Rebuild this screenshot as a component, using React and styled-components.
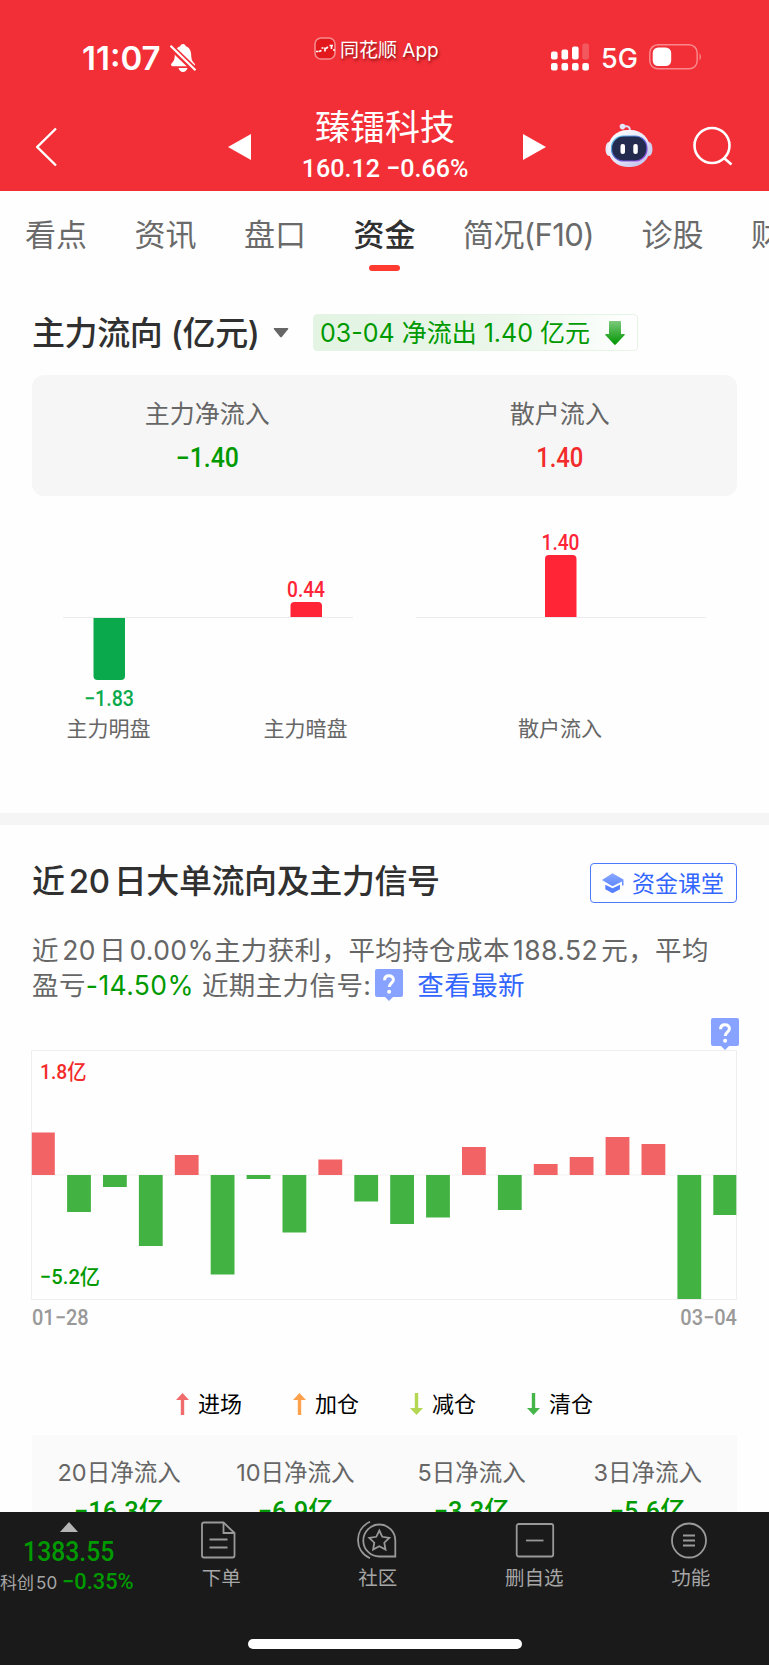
import React from 'react'
import styled, { createGlobalStyle } from 'styled-components'

const tabs = ['看点', '资讯', '盘口', '资金', '简况(F10)', '诊股', '财']

const flowBars = [
    { label: '主力明盘', value: '−1.83', x: 77, height: -62 },
    { label: '主力暗盘', value: '0.44', x: 274, height: 15 },
    { label: '散户流入', value: '1.40', x: 528.5, height: 62 },
]

const dailyFlow = [
    42.5, -37, -12, -71, 20, -99.5, -4, -57.5, 15.5, -26.5,
    -49, -42.5, 28, -35, 11, 18, 38, 31, -124, -40,
]

const signals = [
    { name: '进场', color: '#f06b6b', up: true },
    { name: '加仓', color: '#ffa04d', up: true },
    { name: '减仓', color: '#b3d653', up: false },
    { name: '清仓', color: '#45b549', up: false },
]

const totals = [
    { name: '20日净流入', value: '−16.3亿' },
    { name: '10日净流入', value: '−6.9亿' },
    { name: '5日净流入', value: '−3.3亿' },
    { name: '3日净流入', value: '−5.6亿' },
]

function QuestionMark() {
    return (
        <svg width="28" height="32" viewBox="0 0 28 32">
            <path d="M2 0h24a2 2 0 0 1 2 2v24a2 2 0 0 1-2 2h-8l-4 4-4-4H2a2 2 0 0 1-2-2V2a2 2 0 0 1 2-2z" fill="#88a3ff"/>
            <path d="M9.600 11.200c0-2.800 1.900-4.400 4.400-4.400s4.400 1.600 4.400 4c0 3.300-4.200 3.400-4.200 7.200" fill="none" stroke="#fff" strokeWidth="3"/>
            <circle cx="14.100" cy="22.800" r="2" fill="#fff"/>
        </svg>
    )
}

function Robot() {
    return (
        <svg width="48" height="46" viewBox="0 0 48 46">
            <defs>
                <linearGradient id="shell" x1="0" y1="0" x2=".8" y2="1">
                    <stop offset="0" stopColor="#ffffff"/>
                    <stop offset=".6" stopColor="#e6e6f8"/>
                    <stop offset="1" stopColor="#bfc1ea"/>
                </linearGradient>
                <linearGradient id="rim" x1="0" y1="0" x2="1" y2="1">
                    <stop offset="0" stopColor="#55d8ec"/>
                    <stop offset=".5" stopColor="#5a5fd8"/>
                    <stop offset="1" stopColor="#a94be8"/>
                </linearGradient>
            </defs>
            <path d="M18 3.500c5-1 7 0 7 5" fill="none" stroke="#dfe0f6" strokeWidth="2"/>
            <circle cx="17.500" cy="3.600" r="2.800" fill="#e4e5f8"/>
            <ellipse cx="4" cy="26" rx="3.500" ry="7" fill="#e9e9f9"/>
            <ellipse cx="44" cy="26" rx="3.500" ry="7" fill="#cfcff1"/>
            <rect x="3" y="7" width="42" height="37" rx="19" fill="url(#shell)"/>
            <rect x="6.500" y="13" width="35.500" height="25" rx="12" fill="#232c4e" stroke="url(#rim)" strokeWidth="1.200"/>
            <rect x="15.500" y="21" width="4.500" height="10" rx="2" fill="#fff"/>
            <rect x="28.300" y="21" width="4.500" height="10" rx="2" fill="#fff"/>
        </svg>
    )
}

function FlowChart() {
    return (
        <ChartSvg width="705" height="317" viewBox="0 0 705 317">
            <path d="M31 121.500h290M384 121.500h290" stroke="#ececec" strokeWidth="1"/>
            {flowBars.map(({ label, value, x, height }) => {
                const up = height > 0
                const color = up ? '#ff2436' : '#0aaa4c'
                const h = Math.abs(height)
                return (
                    <g key={label}>
                        <path
                            transform={`translate(${x - 15.5} ${up ? 121 : 122}) scale(1 ${up ? -1 : 1})`}
                            d={`M0 0V${h - 4}q0 4 4 4H27.500q4 0 4-4V0z`}
                            fill={color}
                        />
                        <ChartValue x={x} y={up ? 121 - h - 5.5 : 209.5} fill={color} textLength={up ? 38 : 50} lengthAdjust="spacingAndGlyphs">
                            {value}
                        </ChartValue>
                        <ChartLabel x={x - 0.5} y="240">{label}</ChartLabel>
                    </g>
                )
            })}
        </ChartSvg>
    )
}

function DailyChart() {
    return (
        <DailySvg width="706" height="250" viewBox="0 0 706 250">
            <rect x=".5" y=".5" width="705" height="249" fill="none" stroke="#efefef"/>
            <path d="M0 125h706" stroke="#f2f2f2"/>
            {dailyFlow.map((v, i) => (
                <rect
                    key={i}
                    x={i * 35.9 + (i ? 0.2 : 0.8)}
                    y={v > 0 ? 125 - v : 125}
                    width={i === 0 || i === 19 ? 23 : 23.8}
                    height={Math.abs(v)}
                    fill={v > 0 ? '#f16365' : '#42b342'}
                />
            ))}
            <AxisText x="9" y="29" fill="#f22b2b" textLength="46.500" lengthAdjust="spacingAndGlyphs">1.8亿</AxisText>
            <AxisText x="9" y="234" fill="#009a00" textLength="60" lengthAdjust="spacingAndGlyphs">−5.2亿</AxisText>
        </DailySvg>
    )
}

function App() {
    return (
        <Page>
            <GlobalStyle/>
            <Header>
                <StatusBar>
                    <Clock>11:07</Clock>
                    <svg width="28" height="30" viewBox="0 0 28 30">
                        <path d="M14 1c1.600 0 2.500 1 2.700 2.200 3.900 1.200 5.300 4.400 5.500 8.800.2 5 1.300 6.600 3.300 8.600.9 1 .5 2.600-1 2.600H3.500c-1.500 0-1.900-1.600-1-2.600 2-2 3.100-3.600 3.300-8.600.2-4.400 1.600-7.600 5.500-8.800C11.500 2 12.400 1 14 1z" fill="#fff"/>
                        <path d="M9.500 25h9c-.5 2.200-2.200 4-4.500 4s-4-1.800-4.500-4z" fill="#fff"/>
                        <path d="M-1 1L28 29" stroke="#f22f37" strokeWidth="6"/>
                        <path d="M1.500 2.800L26.500 27.200" stroke="#fff" strokeWidth="2.200"/>
                    </svg>
                    <AppBadge>
                        <svg width="22" height="23" viewBox="0 0 22 23">
                            <rect x="1" y="1" width="20" height="21" rx="6" fill="#e3181c" stroke="#f58a8c" strokeWidth="1.600"/>
                            <path d="M2 14.500h2.500M5 14.500l2.500-1M7.500 11h2M11 10.500v4M12 11.500l2-1.500M15.500 8.500h3.500M17.500 9v3M19 13h2" fill="none" stroke="#fff" strokeWidth="1.700"/>
                        </svg>
                        同花顺 App
                    </AppBadge>
                    <Phone>
                        <svg width="38" height="28" viewBox="0 0 38 28" fill="#fff">
                            <rect x="0" y="8.500" width="6.600" height="8" rx="2"/>
                            <rect x="10.500" y="6.500" width="6.600" height="10" rx="2"/>
                            <rect x="21" y="3.500" width="6.600" height="13" rx="2"/>
                            <rect x="31.300" y="0.500" width="6.600" height="16" rx="2" opacity=".2"/>
                            <rect x="0" y="20" width="6.600" height="7.500" rx="2"/>
                            <rect x="10.500" y="20" width="6.600" height="7.500" rx="2"/>
                            <rect x="21" y="20" width="6.600" height="7.500" rx="2"/>
                            <rect x="31.300" y="20" width="6.600" height="7.500" rx="2"/>
                        </svg>
                        <Network>5G</Network>
                        <Battery width="54" height="26" viewBox="0 0 54 26">
                            <rect x=".8" y=".8" width="47.400" height="24" rx="8" fill="none" stroke="#f9888c" strokeWidth="1.500"/>
                            <rect x="3.700" y="3.500" width="18.500" height="18.500" rx="5.500" fill="#fff"/>
                            <path d="M50.500 9q3 3.800 0 7.600z" fill="#f9888c"/>
                        </Battery>
                    </Phone>
                </StatusBar>
                <NavBar>
                    <svg width="22" height="40" viewBox="0 0 22 40">
                        <path d="M20 1.500L1.300 20 20 38.500" fill="none" stroke="#fff" strokeWidth="2.400"/>
                    </svg>
                    <Triangle viewBox="0 0 23 26">
                        <path d="M23 0v26L0 13z" fill="#fff"/>
                    </Triangle>
                    <Stock>
                        <StockName>臻镭科技</StockName>
                        <Price $scale={0.945}>160.12 −0.66%</Price>
                    </Stock>
                    <Triangle viewBox="0 0 23 26">
                        <path d="M0 0v26l23-13z" fill="#fff"/>
                    </Triangle>
                    <NavIcons>
                        <Robot/>
                        <svg width="40" height="40" viewBox="0 0 40 40" fill="none" stroke="#fff" strokeWidth="2.600">
                            <circle cx="19" cy="19.500" r="17.500"/>
                            <path d="M31 32l7.500 6.500"/>
                        </svg>
                    </NavIcons>
                </NavBar>
            </Header>
            <TabBar>
                {tabs.map((tab) => (
                    <Tab key={tab} $active={tab === '资金'} $tight={tab.length > 2}>{tab}</Tab>
                ))}
            </TabBar>
            <Content>
                <Section>
                    <FlowTitle>
                        <FlowName>主力流向 (亿元)</FlowName>
                        <svg width="16" height="10" viewBox="0 0 16 10">
                            <path d="M1.500 0h13q1.500 0 .5 1.300L9 8.700q-1 1-2 0L1 1.300Q0 0 1.500 0z" fill="#666"/>
                        </svg>
                        <FlowTag>
                            <TagText>03-04 净流出 1.40 亿元</TagText>
                            <svg width="20" height="24" viewBox="0 0 20 24">
                                <defs>
                                    <linearGradient id="down" x1="0" y1="0" x2="0" y2="1">
                                        <stop offset="0" stopColor="#7cc97c"/>
                                        <stop offset="1" stopColor="#009600"/>
                                    </linearGradient>
                                </defs>
                                <path d="M5 0h10q1 0 1 1v12h3.500q.5.800 0 1.300L11 23.200q-1 1-2 0L.5 14.300Q0 13.800.5 13H4V1q0-1 1-1z" fill="url(#down)"/>
                            </svg>
                        </FlowTag>
                    </FlowTitle>
                    <Summary>
                        <SummaryCell>
                            <SummaryLabel>主力净流入</SummaryLabel>
                            <SummaryValue $scale={0.92} $color="#009a00">−1.40</SummaryValue>
                        </SummaryCell>
                        <SummaryCell>
                            <SummaryLabel>散户流入</SummaryLabel>
                            <SummaryValue $scale={0.88} $color="#f22b2b">1.40</SummaryValue>
                        </SummaryCell>
                    </Summary>
                    <FlowChart/>
                </Section>
                <Divider/>
                <Section>
                    <TitleRow>
                        <SectionTitle>近20日大单流向及主力信号</SectionTitle>
                        <CourseButton>
                            <svg width="22" height="21" viewBox="0 0 22 21">
                                <defs>
                                    <linearGradient id="cap" x1="0" y1="0" x2="0" y2="1">
                                        <stop offset="0" stopColor="#8aa9ff"/>
                                        <stop offset="1" stopColor="#5f88ff"/>
                                    </linearGradient>
                                </defs>
                                <path d="M10.500.3L21.500 6.500v6H20V8.500L10.500 13.300 0 7z" fill="url(#cap)"/>
                                <path d="M3.300 11.800l7.200 3.400 7.500-3.400v4.500l-7.500 4-7.200-4z" fill="#5580ff"/>
                            </svg>
                            <CourseText>资金课堂</CourseText>
                        </CourseButton>
                    </TitleRow>
                    <Description>
                        <Line>近20日0.00%主力获利，平均持仓成本188.52元，平均</Line>
                        <Line>
                            盈亏<Loss>-14.50%</Loss> 近期主力信号:
                            <SignalHelp>
                                <QuestionMark/>
                            </SignalHelp>
                            <Link>查看最新</Link>
                        </Line>
                    </Description>
                    <Help>
                        <QuestionMark/>
                    </Help>
                    <DailyChart/>
                    <Dates>
                        <DateText $origin="left">01−28</DateText>
                        <DateText $origin="right">03−04</DateText>
                    </Dates>
                    <Legend>
                        {signals.map(({ name, color, up }) => (
                            <LegendItem key={name}>
                                <svg width="13" height="22" viewBox="0 0 13 22">
                                    <path
                                        transform={up ? undefined : 'rotate(180 6.5 11)'}
                                        d="M6.500 0L13 7H8.200v15H4.800V7H0z"
                                        fill={color}
                                    />
                                </svg>
                                {name}
                            </LegendItem>
                        ))}
                    </Legend>
                    <Totals>
                        {totals.map(({ name, value }) => (
                            <Total key={name}>
                                <TotalName>{name}</TotalName>
                                <TotalValue $scale={0.98}>{value}</TotalValue>
                            </Total>
                        ))}
                    </Totals>
                </Section>
            </Content>
            <Footer>
                <FooterBar>
                    <IndexBox>
                        <svg width="18" height="10" viewBox="0 0 18 10">
                            <path d="M9 0l9 10H0z" fill="#b5b5b5"/>
                        </svg>
                        <IndexValue $scale={0.9}>1383.55</IndexValue>
                        <IndexLine>
                            科创50<IndexChange>−0.35%</IndexChange>
                        </IndexLine>
                    </IndexBox>
                    <FooterItem $shift={-2}>
                        <FooterIcon viewBox="0 0 40 40">
                            <path d="M5 2.500h19.500L35.500 13v22.500q0 2-2 2H5q-2 0-2-2v-31q0-2 2-2z"/>
                            <path d="M24.500 2.500V13h11M10.500 19.500H28.500M10.500 27.500H28.500"/>
                        </FooterIcon>
                        下单
                    </FooterItem>
                    <FooterItem $shift={-1}>
                        <FooterIcon viewBox="0 0 40 40">
                            <path d="M13 1.800C-3 9-3 31 13 38.200"/>
                            <path d="M38.300 36.500H22.500A16 16 0 1 1 38.300 20.500z"/>
                            <path d="M22.300 10.500l3 6.300 7 1-5 4.900 1.200 6.900-6.200-3.300-6.200 3.300 1.200-6.900-5-4.900 7-1z"/>
                        </FooterIcon>
                        社区
                    </FooterItem>
                    <FooterItem $shift={1}>
                        <FooterIcon viewBox="0 0 40 40">
                            <rect x="1.700" y="4" width="36.500" height="32.500" rx="2"/>
                            <path d="M11 20.500h17.500"/>
                        </FooterIcon>
                        删自选
                    </FooterItem>
                    <FooterItem $shift={-2}>
                        <FooterIcon viewBox="0 0 40 40">
                            <circle cx="20" cy="20.500" r="17"/>
                            <path d="M14 15.500h12M14 20.500h12M14 25.500h12"/>
                        </FooterIcon>
                        功能
                    </FooterItem>
                </FooterBar>
                <HomeIndicator/>
            </Footer>
        </Page>
    )
}

export default App

const GlobalStyle = createGlobalStyle`
    body {
        margin: 0;
        background: #fff;
    }

    svg {
        display: block;
        flex: none;
    }
`

const Page = styled.div`
    display: flex;
    flex-direction: column;
    width: 769px;
    height: 1665px;
    overflow: hidden;
    background: #fefefe;
    color: #666;
    font-family: Inter, "Noto Sans CJK SC", sans-serif;
    white-space: nowrap;
    text-autospace: no-autospace;
`

/* narrow numerals, squeezed around their own centre */
const Num = styled.span`
    display: inline-block;
    font-family: Roboto, "Noto Sans CJK SC", sans-serif;
    font-weight: 500;
    transform: scaleX(${({ $scale }) => $scale || 1});
`

const Header = styled.div`
    flex: none;
    height: 191px;
    background: #f22f37;
    color: #fff;
`

const StatusBar = styled.div`
    display: flex;
    height: 73px;
    padding: 43px 0 0 82px;
    box-sizing: border-box;
`

const Clock = styled.div`
    width: 87px;
    font-size: 33px;
    font-weight: 600;
    line-height: 31px;
`

const AppBadge = styled.div`
    display: flex;
    gap: 4px;
    margin: -6px 0 0 117px;
    width: 237px;
    font-size: 19px;
    line-height: 27px;
    text-shadow: 1px 2px 3px rgba(90, 0, 0, .7);
`

const Phone = styled.div`
    display: flex;
`

const Network = styled.div`
    width: 48px;
    padding-left: 12px;
    font-size: 27px;
    font-weight: 500;
    line-height: 32px;
`

const Battery = styled.svg`
    margin-top: 1px;
`

const NavBar = styled.div`
    display: flex;
    align-items: center;
    height: 118px;
    padding: 0 36px;
    box-sizing: border-box;

    > svg {
        margin-top: 30px;
    }
`

const Triangle = styled.svg`
    width: 23px;
    height: 26px;

    &:nth-of-type(2) {
        margin-left: 170px;
    }
`

const Stock = styled.div`
    display: flex;
    flex-direction: column;
    align-items: center;
    width: 273px;
    padding: 26px 4px 0 0;
    box-sizing: border-box;
`

const StockName = styled.div`
    font-size: 35px;
    line-height: 46px;
`

const Price = styled(Num)`
    font-size: 26.500px;
    line-height: 36px;
`

const NavIcons = styled.div`
    display: flex;
    align-items: center;
    gap: 40px;
    margin: 28px 0 0 59px;
`

const TabBar = styled.div`
    display: flex;
    flex: none;
    gap: 47.500px;
    height: 89px;
    padding-left: 25px;
`

const Tab = styled.div`
    position: relative;
    flex: none;
    height: 88px;
    font-size: 31px;
    line-height: 87px;
    letter-spacing: ${({ $tight }) => ($tight ? '-0.6px' : '0')};
    color: ${({ $active }) => ($active ? '#303030' : '#6a6a6a')};
    font-weight: ${({ $active }) => ($active ? 500 : 400)};

    &::after {
        content: '';
        display: ${({ $active }) => ($active ? 'block' : 'none')};
        position: absolute;
        left: calc(50% - 15.500px);
        bottom: 8px;
        width: 31px;
        height: 6px;
        border-radius: 3px;
        background: #ff3a30;
    }
`

const Content = styled.div`
    flex: 1;
    min-height: 0;
    overflow: hidden;
`

const Section = styled.div`
    padding: 0 32px;
`

const FlowTitle = styled.div`
    display: flex;
    align-items: center;
    height: 37px;
    padding-top: 34px;
`

const SectionTitle = styled.div`
    color: #303030;
    font-size: 33px;
    font-weight: 500;
    line-height: 38px;
    letter-spacing: -.4px;
    text-autospace: normal;
`

const FlowName = styled(SectionTitle)`
    width: 241px;
    line-height: 40px;
`

const FlowTag = styled.div`
    display: flex;
    align-items: center;
    justify-content: space-between;
    width: 325px;
    height: 37px;
    margin-left: 24px;
    padding: 0 12px 0 6px;
    box-sizing: border-box;
    border: 1px solid #e6f4e6;
    border-radius: 4px;
    background: linear-gradient(90deg, #e3f4e3, #e9f6e9 55%, #fff);
    color: #009a00;
    font-size: 25px;
`

const TagText = styled.span`
    padding-bottom: 4px;
`

const Summary = styled.div`
    display: flex;
    height: 121px;
    margin-top: 24px;
    border-radius: 12px;
    background: #f6f6f6;
`

const SummaryCell = styled.div`
    display: flex;
    flex: 1;
    flex-direction: column;
    align-items: center;
    padding: 19px 2px 0 0;
`

const SummaryLabel = styled.div`
    font-size: 25px;
    line-height: 40px;
`

const SummaryValue = styled(Num)`
    margin-top: 4px;
    color: ${({ $color }) => $color};
    font-size: 27px;
    line-height: 40px;
`

const ChartSvg = styled.svg`
    font-family: Roboto, "Noto Sans CJK SC", sans-serif;
`

const DailySvg = styled(ChartSvg)`
    margin-left: -1px;
`

const ChartValue = styled.text`
    font-size: 21.500px;
    font-weight: 500;
    text-anchor: middle;
`

const ChartLabel = styled.text`
    font-size: 21px;
    fill: #666;
    text-anchor: middle;
`

const AxisText = styled.text`
    font-size: 21px;
    font-weight: 500;
`

const Divider = styled.div`
    height: 12px;
    background: #f5f5f5;
`

const TitleRow = styled.div`
    display: flex;
    justify-content: space-between;
    padding-top: 37px;
`

const CourseButton = styled.div`
    display: flex;
    align-items: center;
    gap: 8px;
    width: 147px;
    height: 40px;
    padding-left: 11px;
    margin-top: 1px;
    box-sizing: border-box;
    border: 1.500px solid #4d79ff;
    border-radius: 4px;
    color: #3366ff;
    font-size: 23px;
`

const CourseText = styled.span`
    padding-bottom: 2px;
`

const Description = styled.div`
    margin-top: 29px;
    font-size: 26.500px;
    line-height: 36px;
    letter-spacing: .4px;
    text-autospace: normal;
`

const Line = styled.div`
    display: flex;
    height: 35px;
`

const Loss = styled.span`
    margin-right: 8px;
    color: #009a00;
`

const SignalHelp = styled.div`
    margin: 2px 0 0 4px;
`

const Link = styled.span`
    margin-left: 14px;
    color: #3366ff;
`

const Help = styled.div`
    display: flex;
    justify-content: flex-end;
    height: 32px;
    margin: 16px -2px 0 0;
`

const Dates = styled.div`
    display: flex;
    justify-content: space-between;
    padding-top: 3px;
    color: #999;
    font-size: 21.500px;
    line-height: 30px;
`

const DateText = styled(Num)`
    transform: scaleX(.93);
    transform-origin: ${({ $origin }) => $origin};
    font-weight: 500;
`

const Legend = styled.div`
    display: flex;
    justify-content: center;
    gap: 51px;
    padding-top: 56px;
    color: #000;
    font-size: 22px;
    line-height: 30px;
`

const LegendItem = styled.div`
    display: flex;
    align-items: center;
    gap: 9px;
`

const Totals = styled.div`
    display: flex;
    height: 120px;
    margin-top: 16px;
    background: #fafafa;
`

const Total = styled.div`
    display: flex;
    flex: 1;
    flex-direction: column;
    align-items: center;
    padding: 20px 2px 0 0;
`

const TotalName = styled.div`
    font-size: 23.500px;
    line-height: 36px;
`

const TotalValue = styled(Num)`
    color: #009a00;
    font-size: 26px;
    line-height: 40px;
`

const Footer = styled.div`
    flex: none;
    height: 153px;
    background: #1a1a1a;
    color: #a6a6a6;
`

const FooterBar = styled.div`
    display: flex;
    height: 127px;
`

const IndexBox = styled.div`
    display: flex;
    flex-direction: column;
    align-items: center;
    width: 143.500px;
    padding: 10px 5px 0 0;
    box-sizing: border-box;
`

const IndexValue = styled(Num)`
    margin-top: 3px;
    color: #009a00;
    font-size: 27.500px;
    font-weight: 500;
    line-height: 34px;
`

const IndexLine = styled.div`
    display: flex;
    align-items: baseline;
    align-self: flex-start;
    font-size: 17px;
    line-height: 24px;
    text-autospace: normal;
`

const IndexChange = styled(Num)`
    margin-left: 5px;
    color: #009a00;
    font-size: 22.500px;
    font-weight: 500;
    transform: scaleX(.97);
    transform-origin: left;
`

const FooterItem = styled.div`
    display: flex;
    flex: 0 0 156.500px;
    flex-direction: column;
    align-items: center;
    padding-top: 8px;
    font-size: 19.500px;
    line-height: 37px;

    svg {
        margin-left: ${({ $shift }) => $shift * 2}px;
    }
`

const FooterIcon = styled.svg`
    width: 40px;
    height: 40px;
    fill: none;
    stroke: #999;
    stroke-width: 1.800;
`

const HomeIndicator = styled.div`
    width: 274px;
    height: 10px;
    margin: 0 auto;
    border-radius: 5px;
    background: #fff;
`
